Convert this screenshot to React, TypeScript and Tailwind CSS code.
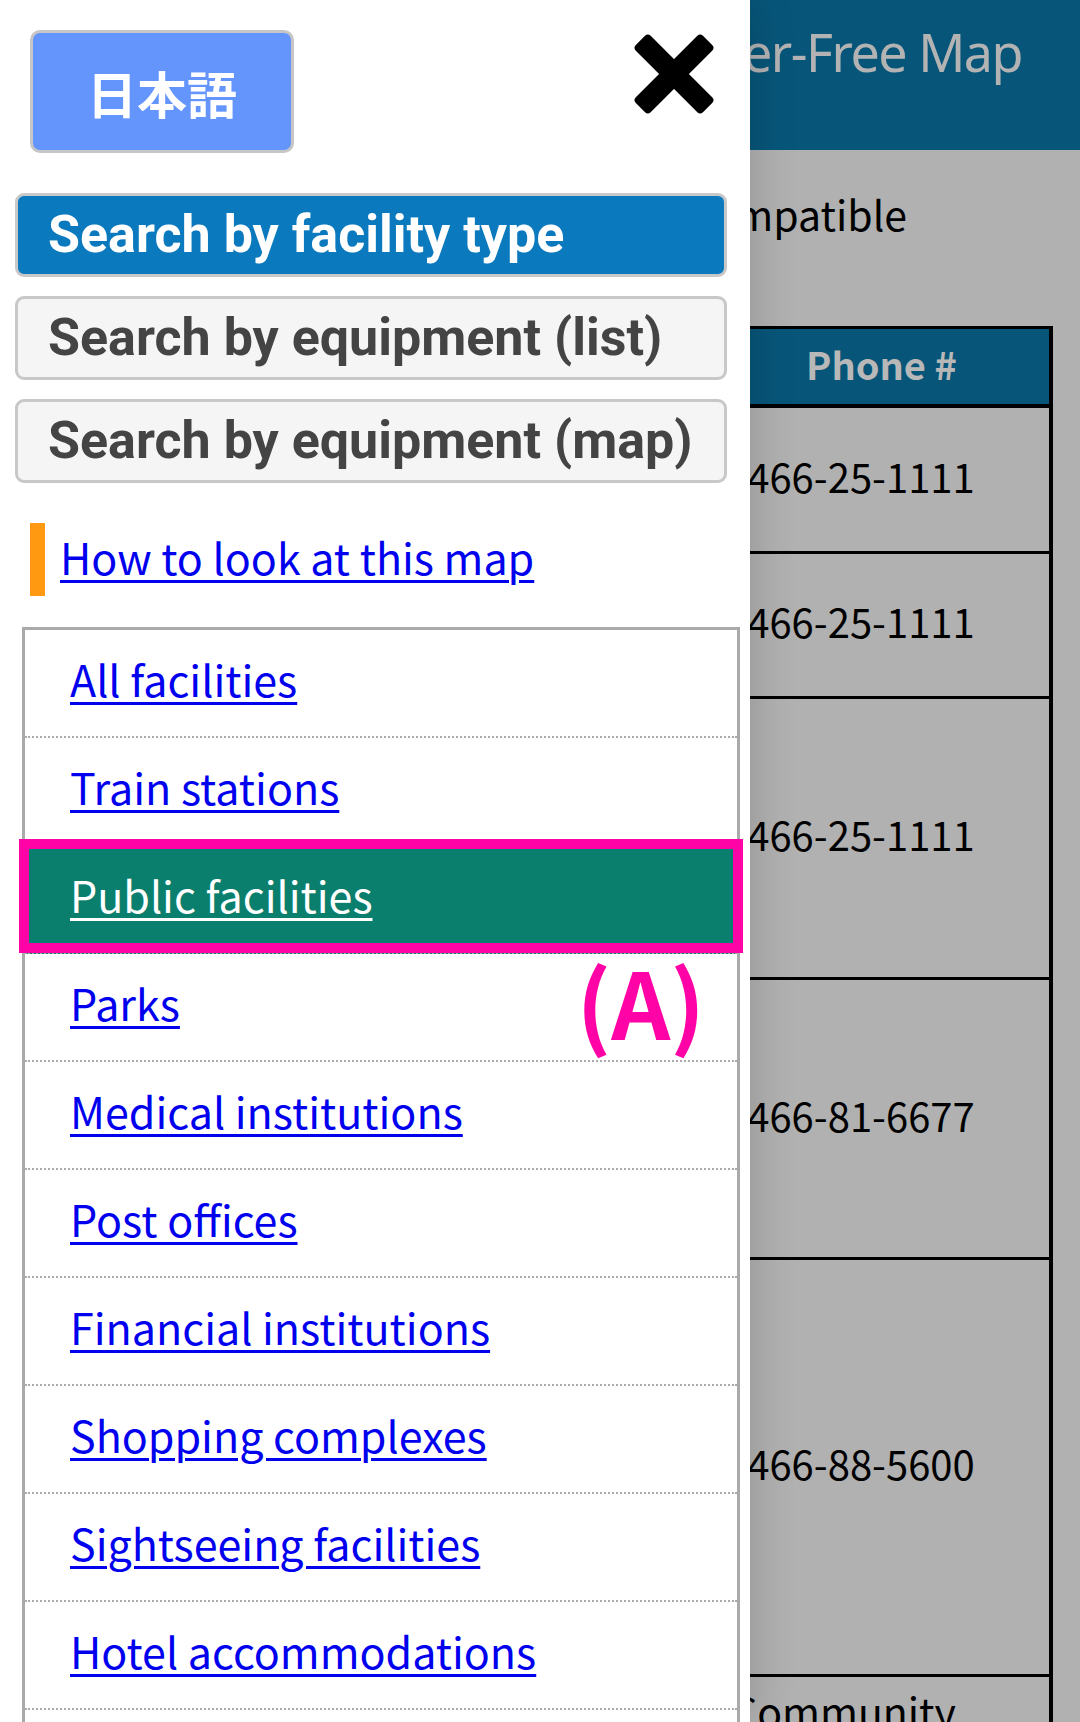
import React from "react";

const facilities = [
  "All facilities",
  "Train stations",
  "Public facilities",
  "Parks",
  "Medical institutions",
  "Post offices",
  "Financial institutions",
  "Shopping complexes",
  "Sightseeing facilities",
  "Hotel accommodations",
  "",
];

const phoneRows = [
  { h: "h-[146px]", phone: "0466-25-1111" },
  { h: "h-[145px]", phone: "0466-25-1111" },
  { h: "h-[281px]", phone: "0466-25-1111" },
  { h: "h-[280px]", phone: "0466-81-6677" },
  { h: "h-[417px]", phone: "0466-88-5600" },
];

const sans = "font-['Noto_Sans_CJK_JP',sans-serif]";

function CloseIcon() {
  return (
    <svg width="82" height="82" viewBox="0 0 82 82" className="mr-[35px] mt-[33px] overflow-visible">
      <rect x="-6.5" y="30.5" width="95" height="21" rx="4" fill="#000" transform="rotate(45 41 41)" />
      <rect x="-6.5" y="30.5" width="95" height="21" rx="4" fill="#000" transform="rotate(-45 41 41)" />
    </svg>
  );
}

export default function App() {
  return (
    <div className="relative h-[1722px] w-[1080px] overflow-hidden bg-[#b1b1b1]">
      {/* page behind the drawer */}
      <header className="flex h-[150px] justify-end bg-[#07567a] pr-[58px] pt-[26px]">
        <h1 className="font-['Noto_Sans',sans-serif] text-[52px] leading-none tracking-[-1.5px] text-[#b3b3b3]">
          Barrier-Free Map
        </h1>
      </header>
      <div className={`flex h-[176px] justify-end pr-[173px] pt-[43px] ${sans} text-[41px] leading-none text-black`}>
        Compatible
      </div>
      <div className={`ml-[400px] w-[653px] border-r-4 border-t-[3px] border-black ${sans}`}>
        <div className="grid h-[79px] grid-cols-[314px_1fr] border-b-4 border-black bg-[#07567a]">
          <div />
          <div className="flex items-center justify-center pb-[6px] text-[38px] font-bold leading-none text-[#b8b8b8]">Phone #</div>
        </div>
        {phoneRows.map((r, i) => (
          <div key={i} className={`grid ${r.h} grid-cols-[314px_1fr] border-b-[3px] border-black`}>
            <div />
            <div className="flex items-center pb-[8px] pl-[11px] text-[40px] leading-none text-black">{r.phone}</div>
          </div>
        ))}
        <div className="grid h-[200px] grid-cols-[314px_1fr]">
          <div />
          <div className="pl-[17px] pt-[13px] text-[41px] leading-none text-black">Community</div>
        </div>
      </div>

      {/* drawer menu */}
      <div className="absolute left-0 top-0 h-full w-[750px] bg-white shadow-[4px_0_40px_rgba(0,0,0,0.16)]">
        <div className="flex items-start justify-between">
          <button className={`ml-[30px] mt-[30px] flex h-[123px] w-[264px] items-center justify-center rounded-[10px] border-[3px] border-[#c6c6c6] bg-[#6495fc] ${sans} text-[50px] font-bold leading-none text-white`}>
            日本語
          </button>
          <CloseIcon />
        </div>

        <div className="ml-[15px] mt-[40px] flex w-[712px] flex-col gap-[19px] font-['Roboto',sans-serif] text-[52px] font-bold leading-none">
          <div className="flex h-[84px] items-center rounded-[9px] border-[3px] border-[#c8c8c8] bg-[#0b79bd] pl-[30px] text-white">
            Search by facility type
          </div>
          <div className="flex h-[84px] items-center rounded-[9px] border-[3px] border-[#c8c8c8] bg-[#f5f5f5] pl-[30px] text-[#444]">
            Search by equipment (list)
          </div>
          <div className="flex h-[84px] items-center rounded-[9px] border-[3px] border-[#c8c8c8] bg-[#f5f5f5] pl-[30px] text-[#444]">
            Search by equipment (map)
          </div>
        </div>

        <div className={`ml-[30px] mt-[40px] flex h-[73px] items-center ${sans}`}>
          <span className="h-full w-[15px] bg-[#ff9912]" />
          <a href="#" className="mb-[6px] ml-[15px] text-[43px] leading-none text-[#0000ee] underline decoration-[3px] underline-offset-[5px]">
            How to look at this map
          </a>
        </div>

        <ul className={`ml-[22px] mt-[31px] w-[718px] border-[3px] border-b-0 border-[#aaa] ${sans}`}>
          {facilities.map((f, i) => {
            const active = i === 2;
            return (
              <li
                key={i}
                className={`relative flex h-[108px] items-center border-b-2 border-dotted border-[#aaa] pb-[9px] pl-[45px] ${active ? "bg-[#0b7f6d]" : ""}`}
              >
                {f && (
                  <a
                    href="#"
                    className={`text-[43px] leading-none underline decoration-[3px] underline-offset-[5px] ${active ? "text-white" : "text-[#0000ee]"}`}
                  >
                    {f}
                  </a>
                )}
                {active && (
                  <span className="absolute left-[-6px] right-[-6px] top-[-7px] h-[114px] border-[10px] border-[#ff03a6]" />
                )}
                {i === 3 && (
                  <span className="absolute right-[32px] top-[0px] text-[92px] font-bold leading-none text-[#ff03a6]">
                    (A)
                  </span>
                )}
              </li>
            );
          })}
        </ul>
      </div>
    </div>
  );
}
